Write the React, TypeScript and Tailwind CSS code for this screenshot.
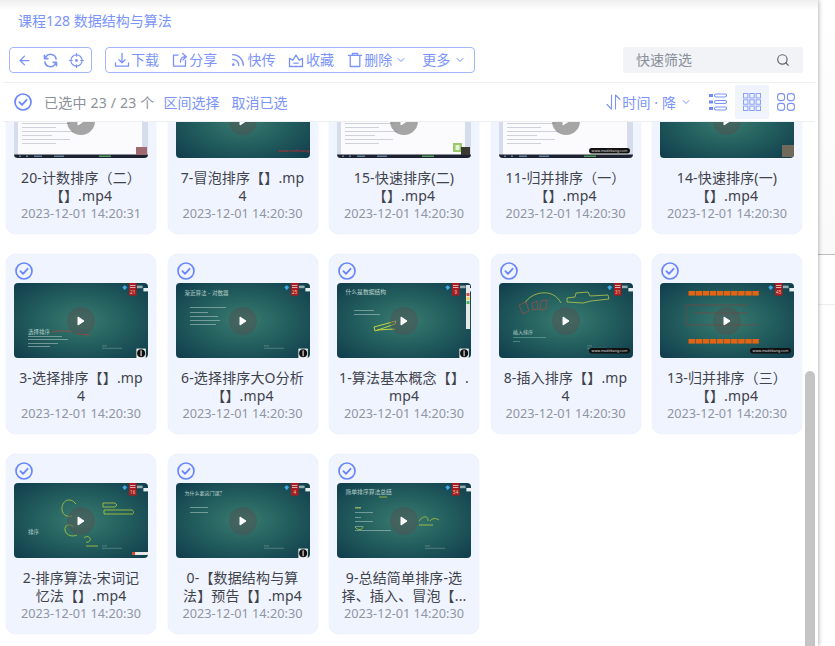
import React from 'react';
import { ArrowLeft, ChevronDown, Rss, Search } from 'lucide-react';

const Check = ({ size = 18 }: { size?: number }) => (
  <svg width={size} height={size} viewBox="0 0 18 18" fill="none" stroke="#6a86fc" strokeWidth="1.7" strokeLinecap="round" strokeLinejoin="round" className="shrink-0">
    <circle cx="9" cy="9" r="8" />
    <path d="M5.4 9.2l2.6 2.6 4.6-5" strokeWidth="1.8" />
  </svg>
);

const Ico = ({ children, size = 16 }: { children: React.ReactNode; size?: number }) => (
  <svg width={size} height={size} viewBox="0 0 16 16" fill="none" stroke="#7b93f8" strokeWidth="1.3" strokeLinecap="round" strokeLinejoin="round" className="shrink-0">
    {children}
  </svg>
);

const tools: { label: string; icon: React.ReactNode }[] = [
  { label: '下载', icon: <Ico><path d="M8 1.5v9M4.8 7.6L8 10.8l3.2-3.2M1.5 11v3.2h13V11" /></Ico> },
  { label: '分享', icon: <Ico><path d="M6 3.2H1.5v11h12V8.5M8.5 10c0-3.5 1.8-5.2 4.5-5.4M10.6 1.6L14.4 4.8l-3.4 3" /></Ico> },
  { label: '快传', icon: <Rss size={16} color="#7b93f8" strokeWidth={2} className="shrink-0" /> },
  { label: '收藏', icon: <Ico><path d="M1.5 6.2l3.4 2L8 3l3.1 5.2 3.4-2v8.3h-13zM5.8 11.2h4.4" /></Ico> },
  { label: '删除', icon: <Ico><path d="M1.5 3.4h13M5.4 3.4V1.5h5.2v1.9M3.2 3.4v11.1h9.6V3.4" /></Ico> },
];

const Logo = ({ num }: { num: string }) => (
  <g>
    <path d="M110.7 2.2l2.4 2-2.4 3-2.4-3z" fill="#3fa9e8" />
    <rect x="115" y="0" width="7.4" height="12.6" fill="#a81c22" />
    <rect x="116" y="2" width="5.4" height="1" fill="#dcb0b0" />
    <rect x="116" y="4" width="5.4" height="1" fill="#dcb0b0" />
    <text x="118.7" y="10.6" fontSize="4.5" textAnchor="middle" fill="#e8d6a8">{num}</text>
    <rect x="123" y="2.6" width="5.6" height="2.6" fill="#b8c8c8" opacity="0.8" />
    <rect x="129.4" y="5" width="4.6" height="3.4" fill="#e8eeee" />
  </g>
);

const Badge = () => (
  <g>
    <rect x="122.4" y="65.6" width="9.4" height="9.4" fill="#f2f2f2" />
    <circle cx="127.1" cy="70.3" r="4" fill="#111" />
    <rect x="126.5" y="67.4" width="1.2" height="5.8" fill="#ddd" />
  </g>
);

const Site = ({ red }: { red?: boolean }) =>
  red ? (
    <text x="122" y="69" fontSize="4" textAnchor="middle" fill="#c8242a">www.madebang.com</text>
  ) : (
    <g>
      <rect x="90" y="65" width="41" height="5.4" rx="2.7" fill="#111" />
      <text x="110.5" y="69" fontSize="3.6" textAnchor="middle" fill="#ddd">www.madebang.com</text>
    </g>
  );

const Contact = () => (
  <g fill="#8fb3ad" opacity="0.55">
    <rect x="88" y="62.5" width="5" height="0.8" />
    <rect x="88" y="64.8" width="20" height="0.8" />
  </g>
);

const Lines = ({ x, ys, w, c = '#b8d0cb' }: { x: number; ys: number[]; w: number[]; c?: string }) => (
  <g fill={c} opacity="0.6">
    {ys.map((y, i) => (
      <rect key={i} x={x} y={y} width={w[i % w.length]} height="0.9" />
    ))}
  </g>
);

const Screen = ({ children }: { children?: React.ReactNode }) => (
  <g>
    <rect width="134" height="75" fill="#fbfbfd" />
    <rect x="0" width="4" height="72" fill="#d5dcec" />
    <rect x="128" width="6" height="72" fill="#d5dcec" />
    <Lines x={8} ys={[40, 44, 48, 52, 56, 60]} w={[48, 34, 52, 30]} c="#a8b0be" />
    <rect y="71.5" width="134" height="3.5" fill="#1c2230" />
    <g fill="#5f7f9f">
      <rect x="5" y="72.5" width="2" height="1.5" />
      <rect x="12" y="72.5" width="2" height="1.5" />
      <rect x="20" y="72.5" width="8" height="1.5" />
      <rect x="40" y="72.5" width="10" height="1.5" />
      <rect x="85" y="72.5" width="12" height="1.5" fill="#4e9a5a" />
    </g>
    {children}
  </g>
);

const Slide = ({ title, x = 8.5, y = 10, size = 5.8 }: { title: string; x?: number; y?: number; size?: number }) => (
  <text x={x} y={y} fontSize={size} fill="#b9d2cc" fontFamily="'Noto Sans CJK SC', sans-serif">{title}</text>
);

const art: Record<string, React.ReactNode> = {
  a: <Screen><rect x="122" y="64" width="11" height="8" fill="#a06a70" /></Screen>,
  b: <g><Logo num="7" /><Site red /></g>,
  c: (
    <Screen>
      <rect x="116" y="60" width="9" height="9" fill="#9bc86a" />
      <rect x="118.5" y="62" width="4" height="5" fill="#e4f4d8" />
      <rect x="124" y="64" width="9" height="8" fill="#3a3a32" />
    </Screen>
  ),
  d: <Screen><Site /></Screen>,
  e: <g><Logo num="14" /><rect x="122" y="62" width="12" height="12" fill="#6f6a5a" /></g>,
  f: (
    <g>
      <Logo num="21" />
      <Slide title="选择排序" x={14} y={51} size={5.5} />
      <Lines x={14} ys={[53, 56, 60, 63]} w={[34, 40, 30, 22]} />
      <path d="M38 49c8-2 14-1 20 0M62 51l14 1" stroke="#a8453a" strokeWidth="0.8" fill="none" />
      <Contact />
      <Badge />
    </g>
  ),
  g: (
    <g>
      <Logo num="25" />
      <Slide title="渐近算法 – 对数器" y={12} size={5.5} />
      <Lines x={14} ys={[24, 29, 33, 37, 41]} w={[36, 18, 28, 30, 26]} />
      <Contact />
      <Badge />
    </g>
  ),
  h: (
    <g>
      <Logo num="9" />
      <Slide title="什么是数据结构" y={11} />
      <Lines x={17} ys={[27, 31]} w={[20, 26]} />
      <path d="M37 44l22-6-1 3-20 7zM40 47l18-1" stroke="#d8de3c" strokeWidth="0.9" fill="none" />
      <rect x="129" y="2" width="4" height="44" fill="#e8e8e8" />
      <rect x="129.5" y="10" width="3" height="3" fill="#d84a4a" />
      <rect x="129.5" y="14" width="3" height="3" fill="#e8d84a" />
      <rect x="129.5" y="18" width="3" height="3" fill="#4ab86a" />
      <Badge />
    </g>
  ),
  i: (
    <g>
      <Logo num="31" />
      <path d="M26 20c6-11 28-16 36 0" stroke="#b8c848" strokeWidth="0.8" fill="none" />
      <path d="M20 22l7-3 3 9-6 3zM33 20l5-2 1 8-5 1zM42 18l6-1-1 9-6 1z" stroke="#984c48" strokeWidth="0.8" fill="none" />
      <path d="M68 15l8-1 1-4 12-1 2 4 18-1 1 4-18 2-8 2-16-1z" stroke="#b8c848" strokeWidth="0.8" fill="none" />
      <Slide title="插入排序" x={14} y={51} size={5} />
      <Lines x={14} ys={[54, 58]} w={[33, 7]} c="#6fb8a8" />
      <Contact />
      <Site />
    </g>
  ),
  j: (
    <g>
      <Logo num="45" />
      <g fill="#e06414">
        {[0, 1, 2, 3, 4, 5, 6, 7, 8, 9].map((n) => (
          <g key={n}>
            <rect x={28.5 + n * 7.1} y="8" width="6.4" height="4.6" />
            <rect x={28.5 + n * 7.1} y="56" width="6.4" height="4.6" />
          </g>
        ))}
      </g>
      <path d="M26 22h62M26 22v20h72M34 30h54" stroke="#7c4640" strokeWidth="0.7" fill="none" />
      <Site />
    </g>
  ),
  k: (
    <g>
      <Logo num="16" />
      <Slide title="排序" x={14} y={51} size={5.5} />
      <path d="M62 21c-6-8-15-3-14 6 1 6 6 7 10 6M60 44c-4-4-10-2-9 3 1 6 8 7 12 5M89 20h12c2 1 2 3 0 4H89zM90 27h28c2 1 2 4 0 4H90zM70 55c2-2 4-2 6 0 1 2-1 5-4 4M72 63h12" stroke="#b8ca3a" strokeWidth="0.8" fill="none" />
      <Contact />
      <rect x="118" y="69" width="16" height="3" fill="#e8e8e8" />
      <rect x="118" y="69" width="3" height="3" fill="#d84a2a" />
    </g>
  ),
  l: (
    <g>
      <Logo num="4" />
      <Slide title="为什么要这门课？" y={12} size={5} />
      <Lines x={14} ys={[24, 29]} w={[18, 18]} />
      <Contact />
      <Badge />
    </g>
  ),
  m: (
    <g>
      <Logo num="54" />
      <Slide title="简单排序算法总结" y={11} />
      <Lines x={18} ys={[24, 29, 34, 38, 43, 47]} w={[6, 18, 6, 18, 7, 36]} />
      <path d="M42 14h8M82 38c4-6 10-5 9 0M93 38c2-3 6-3 9-1M82 42h14M18 25h6M18 44c3 4 8 3 8-1" stroke="#b8ca3a" strokeWidth="0.8" fill="none" />
      <Contact />
    </g>
  ),
};

const files = [
  { art: 'a', name: '20-计数排序（二）\n【】.mp4', time: '2023-12-01 14:20:31' },
  { art: 'b', name: '7-冒泡排序【】.mp\n4', time: '2023-12-01 14:20:30' },
  { art: 'c', name: '15-快速排序(二)\n【】.mp4', time: '2023-12-01 14:20:30' },
  { art: 'd', name: '11-归并排序（一）\n【】.mp4', time: '2023-12-01 14:20:30' },
  { art: 'e', name: '14-快速排序(一)\n【】.mp4', time: '2023-12-01 14:20:30' },
  { art: 'f', name: '3-选择排序【】.mp\n4', time: '2023-12-01 14:20:30' },
  { art: 'g', name: '6-选择排序大O分析\n【】.mp4', time: '2023-12-01 14:20:30' },
  { art: 'h', name: '1-算法基本概念【】.\nmp4', time: '2023-12-01 14:20:30' },
  { art: 'i', name: '8-插入排序【】.mp\n4', time: '2023-12-01 14:20:30' },
  { art: 'j', name: '13-归并排序（三）\n【】.mp4', time: '2023-12-01 14:20:30' },
  { art: 'k', name: '2-排序算法-宋词记\n忆法【】.mp4', time: '2023-12-01 14:20:30' },
  { art: 'l', name: '0-【数据结构与算\n法】预告【】.mp4', time: '2023-12-01 14:20:30' },
  { art: 'm', name: '9-总结简单排序-选\n择、插入、冒泡【...', time: '2023-12-01 14:20:30' },
];

function Card({ file }: { file: (typeof files)[number] }) {
  return (
    <div className="flex h-[180px] flex-col rounded-[10px] bg-[#f0f4ff] px-2 pt-2 shadow-[0_0_1px_rgba(120,140,200,0.35)]">
      <div className="ml-px"><Check /></div>
      <div className="relative mt-[3px] h-[75px] w-[134px] shrink-0 overflow-hidden rounded-[4px] bg-[radial-gradient(ellipse_at_center,#3a7c70_0%,#24605f_45%,#103c4c_100%)]">
        <svg viewBox="0 0 134 75" className="absolute inset-0 h-full w-full">
          {art[file.art]}
        </svg>
        <div className="absolute left-[53px] top-[23.5px] flex h-7 w-7 items-center justify-center rounded-full bg-[#505050]/50">
          <svg width="8" height="10" viewBox="0 0 8 10"><path d="M1 1l6 4-6 4z" fill="#fff" stroke="#fff" strokeLinejoin="round" /></svg>
        </div>
      </div>
      <div className="mt-[11px] h-9 whitespace-pre-line text-center text-[14px] leading-[18px] tracking-[0.15px] text-[#3f434c]">
        {file.name}
      </div>
      <div className="text-center text-[12.7px] leading-4 text-[#8f95a3]">{file.time}</div>
    </div>
  );
}

export default function App() {
  return (
    <div className="flex h-[646px] w-[835px] overflow-hidden bg-white font-['Noto_Sans','Noto_Sans_CJK_SC',sans-serif]">
      <main className="relative z-10 flex w-[818px] shrink-0 flex-col bg-white shadow-[1px_0_4px_rgba(0,0,0,0.28)]">
        <header className="shrink-0 bg-gradient-to-b from-[#eeeeee] from-0% to-white to-[10px]">
          <div className="h-[47px] px-[18px] pt-3 text-[14px] leading-[18px] text-[#7a94fb]">课程128 数据结构与算法</div>
          <div className="flex h-[26px] items-stretch pl-[9px] pr-[15px] text-[14px] text-[#7a94fb]">
            <div className="flex w-[83px] items-center justify-between rounded-[4px] border border-[#a3b5fb] px-[7px]">
              <ArrowLeft size={15} color="#7b93f8" strokeWidth={2} />
              <svg width="15" height="15" viewBox="0 0 16 16" fill="none" stroke="#7b93f8" strokeWidth="1.7" strokeLinecap="round" strokeLinejoin="round">
                <path d="M14 6.4A6 6 0 0 0 3 4.2L1.8 6M2 9.6a6 6 0 0 0 11 2.2L14.2 10M1.6 2.4V6h3.6M14.4 13.6V10h-3.6" />
              </svg>
              <svg width="15" height="15" viewBox="0 0 16 16" fill="none" stroke="#7b93f8" strokeWidth="1.2" strokeLinecap="round">
                <circle cx="8" cy="8" r="6" />
                <circle cx="8" cy="8" r="0.9" fill="#7b93f8" />
                <path d="M8 .5v3M8 12.5v3M.5 8h3M12.5 8h3" />
              </svg>
            </div>
            <div className="ml-[13px] flex w-[370px] items-center gap-[13.3px] rounded-[4px] border border-[#a3b5fb] pl-2">
              {tools.map((t) => (
                <span key={t.label} className="flex items-center gap-[2px] leading-none">
                  <span className="flex w-[15px] justify-center">{t.icon}</span>
                  {t.label}
                </span>
              ))}
              <ChevronDown size={12} color="#7b93f8" className="-ml-[10.3px]" />
              <span className="ml-[1.7px] flex items-center gap-1 leading-none">
                更多
                <ChevronDown size={12} color="#7b93f8" />
              </span>
            </div>
            <div className="ml-auto flex w-[180px] items-center justify-between rounded-[3px] bg-[#f1f3f6] px-[13px] text-[#8a8f99]">
              <span className="leading-none">快速筛选</span>
              <Search size={14} color="#5c6470" />
            </div>
          </div>
          <div className="mx-[3px] h-[10px] border-b border-[#eceef2]" />
          <div className="mx-[3px] flex h-[39px] items-center border-b border-[#eceef2] pl-[11px] pr-[20px] text-[14px] text-[#7a94fb]">
            <Check />
            <span className="ml-3 tracking-[0.2px] text-[#8b9099]">已选中 23 / 23 个</span>
            <span className="ml-[9px]">区间选择</span>
            <span className="ml-3">取消已选</span>
            <span className="ml-auto flex items-center">
              <svg width="15" height="18" viewBox="0 0 15 18" fill="none" stroke="#7b93f8" strokeWidth="1.1" strokeLinecap="round" strokeLinejoin="round">
                <path d="M5.5 2v14L1 11.5M9.5 16V2L14 6.5" />
              </svg>
              <span className="ml-px tracking-[0.1px]">时间 · 降</span>
              <ChevronDown size={12} color="#7b93f8" className="ml-[4px]" />
            </span>
            <span className="ml-[17px] flex h-[34px] w-[26px] items-center">
              <svg width="18" height="18" viewBox="0 0 18 18" fill="none" stroke="#7b93f8" strokeWidth="1.1">
                <rect x="0" y="1" width="4" height="3" fill="#6e8afc" stroke="none" />
                <rect x="0" y="7.5" width="4" height="3" fill="#6e8afc" stroke="none" />
                <rect x="0" y="14" width="4" height="3" fill="#6e8afc" stroke="none" />
                <rect x="5.5" y="1" width="12" height="3" rx="1.5" />
                <rect x="5.5" y="7.5" width="12" height="3" rx="1.5" />
                <rect x="5.5" y="14" width="12" height="3" rx="1.5" />
              </svg>
            </span>
            <span className="flex h-[34px] w-[34px] items-center justify-center rounded-[2px] bg-[#f0f4ff]">
              <svg width="18" height="18" viewBox="0 0 18 18" fill="none" stroke="#8aa0fa" strokeWidth="1">
                {[0.5, 6.8, 13.1].map((x) =>
                  [0.5, 6.8, 13.1].map((y) => <rect key={`${x}-${y}`} x={x} y={y} width="4.4" height="4.4" />)
                )}
              </svg>
            </span>
            <span className="ml-2 flex h-[34px] items-center">
              <svg width="18" height="18" viewBox="0 0 18 18" fill="none" stroke="#7b93f8" strokeWidth="1.1">
                <rect x="0.6" y="0.6" width="7" height="7" rx="2.6" />
                <rect x="10.4" y="0.6" width="7" height="7" rx="2.6" />
                <rect x="0.6" y="10.4" width="7" height="7" rx="2.6" />
                <rect x="10.4" y="10.4" width="7" height="7" rx="2.6" />
              </svg>
            </span>
          </div>
        </header>
        <div className="flex min-h-0 flex-1 overflow-hidden">
          <div className="ml-[6px] mt-[-68px] grid w-[796px] shrink-0 grid-cols-5 content-start gap-x-[11.5px] gap-y-5">
            {files.map((f) => (
              <Card key={f.name} file={f} />
            ))}
          </div>
          <div className="ml-[3px] flex w-[10px] flex-col justify-end">
            <div className="h-[275px] rounded-t-[5px] bg-[#c4c4c4]" />
          </div>
        </div>
      </main>
      <aside className="flex-1 bg-white">
        <div className="h-[255px] border-b border-[#bdbdbd] bg-gradient-to-b from-white to-[#fafafa]" />
        <div className="h-[50px] border-b border-[#eeeeee]" />
      </aside>
    </div>
  );
}
